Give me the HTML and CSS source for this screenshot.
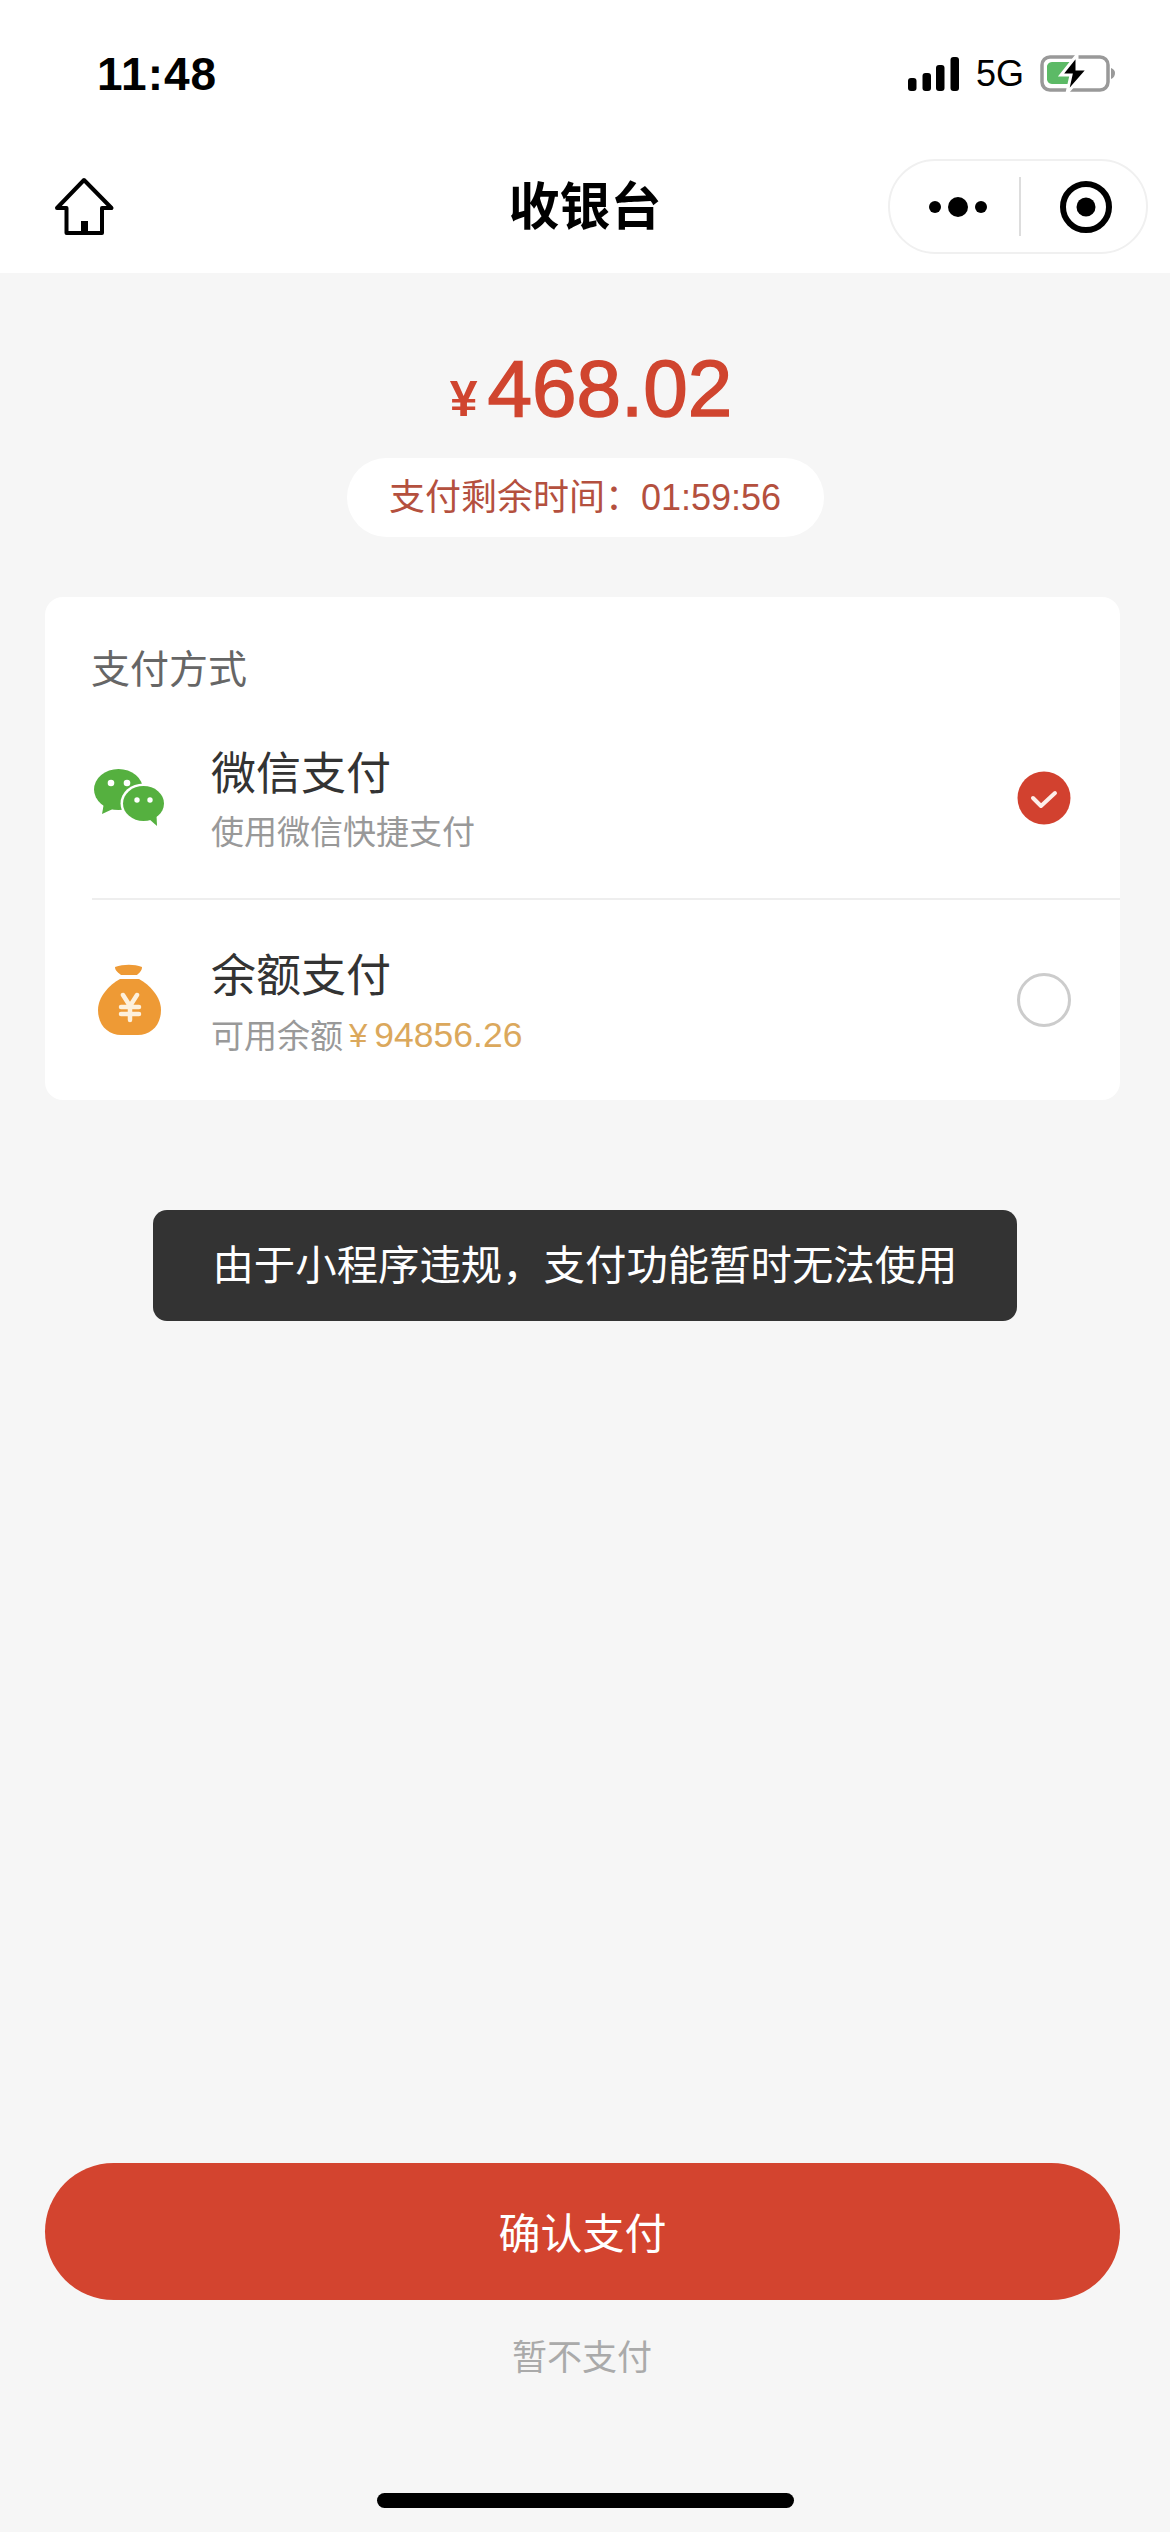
FILE: index.html
```html
<!DOCTYPE html>
<html lang="zh-CN">
    <head>
        <meta charset="UTF-8">
        <meta name="viewport" content="width=device-width, initial-scale=1.0">
        <title>收银台</title>
        <link rel="stylesheet" href="styles.css">
    </head>
<body>
    <div class="page">
        <div class="top-bar">
            <div class="status-bar">
                <span class="time">11:48</span>
                <div class="status-icons">
                    <svg class="signal" width="51" height="34" viewBox="0 0 51 34">
                        <rect x="0" y="21" width="8.500" height="13" rx="3"/>
                        <rect x="14.500" y="16" width="8.500" height="18" rx="3"/>
                        <rect x="28" y="8" width="8.500" height="26" rx="3"/>
                        <rect x="42.500" y="0" width="8.500" height="34" rx="3"/>
                    </svg>
                    <span class="network">5G</span>
                    <svg class="battery" width="76" height="40" viewBox="0 0 76 40">
                        <rect x="2" y="3" width="66" height="33" rx="8" fill="none" stroke="#999" stroke-width="3.5"/>
                        <path d="M7 14a5 5 0 0 1 5-6h22v22H12a5 5 0 0 1-5-6z" fill="#5cba66"/>
                        <path d="M71 14c3 1 4 3 4 5s-1 5-4 6z" fill="#999"/>
                        <path d="M37 1L21 21h10l-4 18 21-24H37z" stroke="#fff" stroke-width="3"/>
                    </svg>
                </div>
            </div>
            <div class="nav-bar">
                <svg class="home-icon" width="62" height="60" viewBox="0 0 62 60">
                    <path d="M31 3L58.500 31H49V56H13.500V31H4z" fill="none" stroke="#000" stroke-width="4" stroke-linejoin="round"/>
                    <rect x="28" y="44" width="7" height="12"/>
                </svg>
                <h1 class="nav-title">收银台</h1>
                <div class="capsule">
                    <svg class="capsule-dots" width="58" height="22" viewBox="0 0 58 22">
                        <circle cx="6" cy="11" r="6"/>
                        <circle cx="29" cy="11" r="10"/>
                        <circle cx="52" cy="11" r="6"/>
                    </svg>
                    <span class="capsule-line"></span>
                    <svg class="capsule-target" width="54" height="54" viewBox="0 0 54 54">
                        <circle cx="27" cy="27" r="23" fill="none" stroke="#000" stroke-width="6"/>
                        <circle cx="27" cy="27" r="9.5"/>
                    </svg>
                </div>
            </div>
        </div>

        <div class="amount">
            <span class="amount-yen">¥</span><span class="amount-num">468.02</span>
        </div>
        <div class="countdown">支付剩余时间：01:59:56</div>

        <div class="pay-card">
            <div class="pay-title">支付方式</div>
            <div class="pay-row">
                <div class="pay-icon">
                    <svg width="70" height="58" viewBox="0 0 70 58">
                        <ellipse cx="24.500" cy="20.500" rx="24.500" ry="20.500" fill="#55b03f"/>
                        <path d="M10 34L8 45L21 39z" fill="#55b03f"/>
                        <circle cx="17" cy="14" r="3.300" fill="#fff"/>
                        <circle cx="33" cy="14" r="3.300" fill="#fff"/>
                        <ellipse cx="49.500" cy="34.500" rx="23" ry="20" fill="#fff"/>
                        <ellipse cx="49.500" cy="34.500" rx="20.500" ry="17.500" fill="#55b03f"/>
                        <path d="M55 50L63 57L62.500 46z" fill="#55b03f"/>
                        <circle cx="43" cy="31" r="2.700" fill="#fff"/>
                        <circle cx="56" cy="31" r="2.700" fill="#fff"/>
                    </svg>
                </div>
                <div class="pay-text">
                    <div class="pay-name">微信支付</div>
                    <div class="pay-desc">使用微信快捷支付</div>
                </div>
                <svg class="radio" width="54" height="54" viewBox="0 0 54 54">
                    <circle cx="27" cy="27" r="26.500" fill="#d2412f"/>
                    <path d="M16 27l8 8 14-13" fill="none" stroke="#fdeee9" stroke-width="4" stroke-linecap="round" stroke-linejoin="round"/>
                </svg>
            </div>
            <div class="pay-row pay-row-line">
                <div class="pay-icon">
                    <svg width="63" height="72" viewBox="0 0 63 72">
                        <path d="M17 3C26 0 36 0 44 3C44 7 41 9 39 11H23C21 9 17 7 17 3z" fill="#ee9a35"/>
                        <path d="M22 15H41C52 21 63 33 63 46C63 62 52 71 40 71H23C11 71 0 62 0 46C0 33 11 21 22 15z" fill="#ee9a35"/>
                        <path d="M25 31l7 11 7-11M23 43H41M23 50H41M32 42V56" fill="none" stroke="#fdf0dc" stroke-width="4.500" stroke-linecap="round" stroke-linejoin="round"/>
                    </svg>
                </div>
                <div class="pay-text">
                    <div class="pay-name">余额支付</div>
                    <div class="pay-desc">可用余额<span class="balance"><span class="balance-yen">¥</span>94856.26</span></div>
                </div>
                <span class="radio radio-empty"></span>
            </div>
        </div>

        <div class="toast">由于小程序违规，支付功能暂时无法使用</div>

        <div class="bottom">
            <button class="confirm-btn">确认支付</button>
            <div class="skip-link">暂不支付</div>
            <div class="home-bar"></div>
        </div>
    </div>
</body>
</html>
```

FILE: styles.css
```css
body {
    margin: 0;
    padding: 0;
    background-color: #f6f6f6;
    font-family: "Liberation Sans", "Noto Sans CJK SC", sans-serif;
}

.page {
    position: relative;
    width: 1170px;
    height: 2532px;
    overflow: hidden;
    display: flex;
    flex-direction: column;
    align-items: center;
}

.top-bar {
    width: 100%;
    background-color: #fff;
}

.status-bar {
    height: 148px;
    padding: 0 54px 0 97px;
    display: flex;
    align-items: center;
    justify-content: space-between;
}

.time {
    font-size: 46px;
    font-weight: 700;
    letter-spacing: 1px;
    color: #000;
}

.status-icons {
    display: flex;
    align-items: center;
}

.signal {
    margin-right: 17px;
}

.network {
    font-size: 36px;
    color: #000;
    margin-right: 16px;
}

.nav-bar {
    padding: 11px 22px 19px;
    display: grid;
    grid-template-columns: 1fr auto 1fr;
    align-items: center;
}

.home-icon {
    margin-left: 31px;
}

.nav-title {
    margin: 2px 0 0;
    font-size: 51px;
    line-height: 60px;
    font-weight: 700;
    color: #000;
}

.capsule {
    justify-self: end;
    box-sizing: border-box;
    width: 260px;
    height: 95px;
    border: 2px solid #f0f0f0;
    border-radius: 48px;
    background-color: #fff;
    display: flex;
    align-items: center;
    padding-left: 39px;
}

.capsule-line {
    width: 2px;
    height: 59px;
    margin: 0 38px 0 32px;
    background-color: #ddd;
}

.amount {
    margin-top: 66px;
    padding-left: 12px;
    height: 100px;
    line-height: 100px;
    color: #d0452f;
    white-space: nowrap;
}

.amount-yen {
    font-size: 50px;
    font-weight: 700;
    margin-right: 10px;
}

.amount-num {
    font-size: 80px;
    -webkit-text-stroke: 1.5px #d0452f;
}

.countdown {
    margin-top: 19px;
    width: 477px;
    height: 79px;
    line-height: 79px;
    border-radius: 40px;
    background-color: #fff;
    text-align: center;
    font-size: 36px;
    color: #b4503e;
    white-space: nowrap;
}

.pay-card {
    box-sizing: border-box;
    align-self: flex-start;
    margin: 60px 0 0 45px;
    width: 1075px;
    height: 503px;
    padding-top: 45px;
    border-radius: 18px;
    background-color: #fff;
}

.pay-title {
    margin-left: 46px;
    height: 55px;
    line-height: 56px;
    font-size: 39px;
    color: #666;
}

.pay-row {
    box-sizing: border-box;
    height: 201px;
    margin-left: 47px;
    padding: 0 49px 0 2px;
    display: flex;
    align-items: center;
}

.pay-row-line {
    border-top: 2px solid #eeeeee;
}

.pay-icon {
    width: 70px;
    margin-right: 47px;
    display: flex;
    justify-content: center;
}

.pay-text {
    flex: 1;
    margin-top: 14px;
}

.pay-name {
    height: 56px;
    line-height: 56px;
    font-size: 45px;
    color: #333;
}

.pay-desc {
    height: 60px;
    line-height: 60px;
    font-size: 33px;
    color: #999;
}

.balance {
    margin-left: 6px;
    font-size: 35.500px;
    vertical-align: 1px;
    color: #dba85c;
}

.balance-yen {
    font-size: 33px;
    margin-right: 7px;
}

.radio {
    display: block;
    flex: none;
}

.radio-empty {
    box-sizing: border-box;
    width: 54px;
    height: 54px;
    border: 3px solid #ccc;
    border-radius: 50%;
}

.toast {
    position: absolute;
    top: 1210px;
    left: 153px;
    width: 864px;
    height: 111px;
    line-height: 113px;
    border-radius: 14px;
    background-color: #333;
    text-align: center;
    font-size: 41.400px;
    color: #fff;
}

.bottom {
    margin-top: auto;
    width: 100%;
    padding-bottom: 24px;
    display: flex;
    flex-direction: column;
    align-items: center;
}

.confirm-btn {
    display: block;
    align-self: flex-start;
    margin-left: 45px;
    width: 1075px;
    height: 137px;
    padding: 0 0 3px;
    border: none;
    border-radius: 69px;
    background-color: #d3442f;
    color: #fff;
    font-family: inherit;
    font-size: 42px;
}

.skip-link {
    margin: 32px 6px 0 0;
    height: 50px;
    line-height: 52px;
    font-size: 35px;
    color: #aaa;
}

.home-bar {
    margin-top: 111px;
    width: 417px;
    height: 15px;
    border-radius: 8px;
    background-color: #000;
}
```
